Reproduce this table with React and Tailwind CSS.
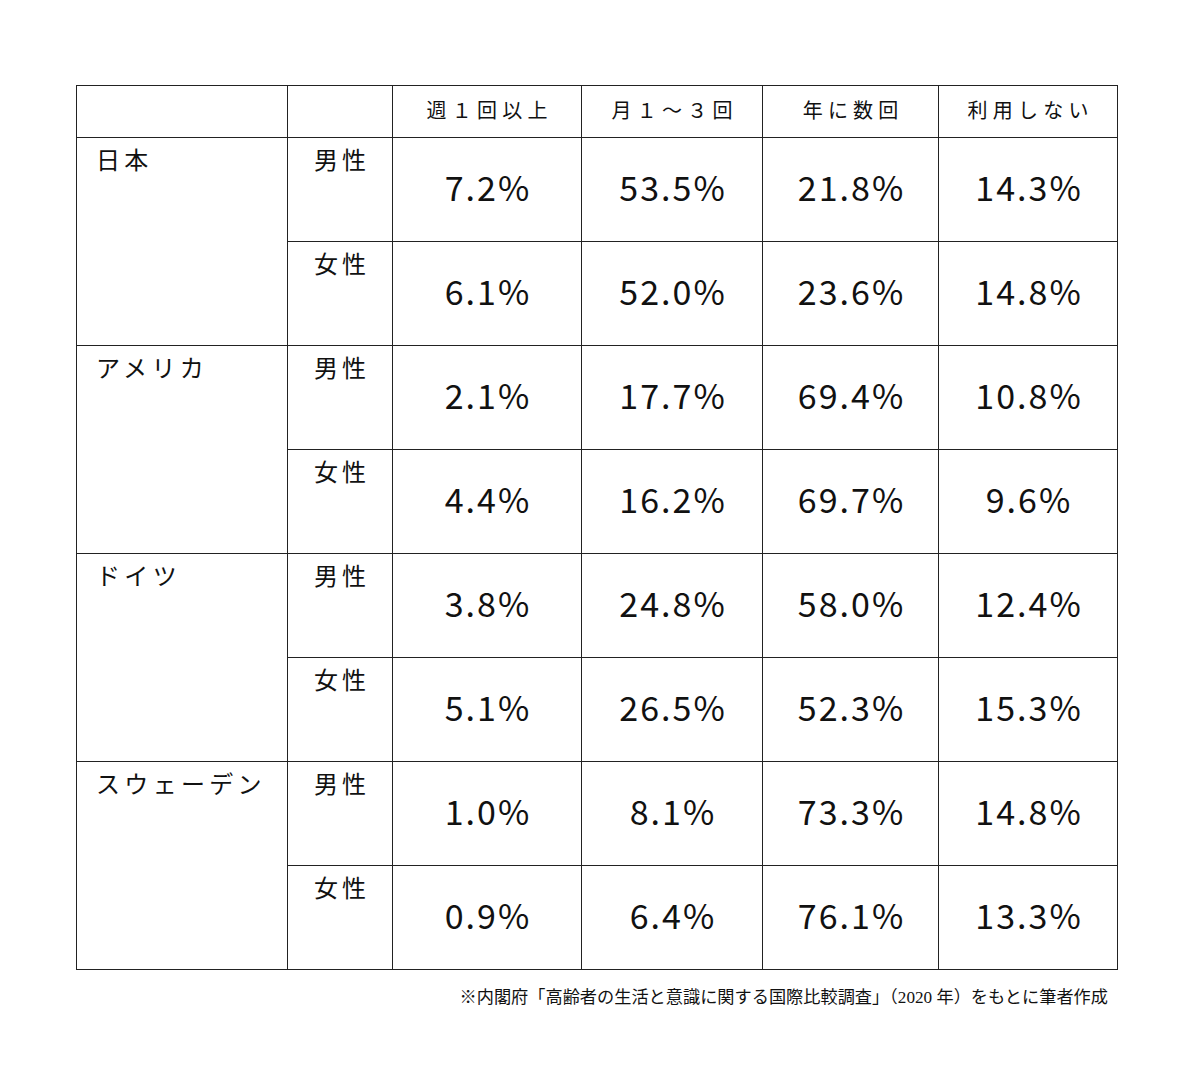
const headers = ["週１回以上", "月１〜３回", "年に数回", "利用しない"];

const rows = [
  { country: "日本", data: [["7.2%", "53.5%", "21.8%", "14.3%"], ["6.1%", "52.0%", "23.6%", "14.8%"]] },
  { country: "アメリカ", data: [["2.1%", "17.7%", "69.4%", "10.8%"], ["4.4%", "16.2%", "69.7%", "9.6%"]] },
  { country: "ドイツ", data: [["3.8%", "24.8%", "58.0%", "12.4%"], ["5.1%", "26.5%", "52.3%", "15.3%"]] },
  { country: "スウェーデン", data: [["1.0%", "8.1%", "73.3%", "14.8%"], ["0.9%", "6.4%", "76.1%", "13.3%"]] },
];

const cell = "border-[1.5px] border-[#222]";

const App = () => {
  return (
    <div className="min-h-[1072px] w-[1200px] bg-white pt-[85px] text-[#111] font-['Noto_Sans_CJK_JP',sans-serif]">
      <table className="ml-[76px] w-[1041px] table-fixed border-collapse">
        <colgroup>
          <col className="w-[211px]" />
          <col className="w-[105px]" />
          <col className="w-[189px]" />
          <col className="w-[181px]" />
          <col className="w-[176px]" />
          <col className="w-[179px]" />
        </colgroup>
        <thead>
          <tr className="h-[52px]">
            <th className={cell}></th>
            <th className={cell}></th>
            {headers.map((h) => (
              <th key={h} className={`${cell} text-center text-[20px] font-normal tracking-[0.26em] pl-[0.26em] pb-[3px]`}>
                {h}
              </th>
            ))}
          </tr>
        </thead>
        <tbody>
          {rows.map((r) =>
            r.data.map((vals, i) => (
              <tr key={r.country + i} className="h-[104px]">
                {i === 0 && (
                  <td rowSpan={2} className={`${cell} align-top pl-[19px] pt-[3px] text-[24px] tracking-[0.18em]`}>
                    {r.country}
                  </td>
                )}
                <td className={`${cell} align-top pt-[3px] text-center text-[24px] tracking-[0.16em] pl-[0.16em]`}>
                  {i === 0 ? "男性" : "女性"}
                </td>
                {vals.map((v, j) => (
                  <td key={j} className={`${cell} text-center align-middle text-[34px] tracking-[0.06em] pl-[0.06em] pb-[6px]`}>
                    {v}
                  </td>
                ))}
              </tr>
            ))
          )}
        </tbody>
      </table>
      <p className="mt-[15px] w-[1108px] text-right text-[17.2px] font-['Liberation_Serif','Noto_Sans_CJK_JP',serif]">
        ※内閣府「高齢者の生活と意識に関する国際比較調査」（2020 年）をもとに筆者作成
      </p>
    </div>
  );
};

export default App;
